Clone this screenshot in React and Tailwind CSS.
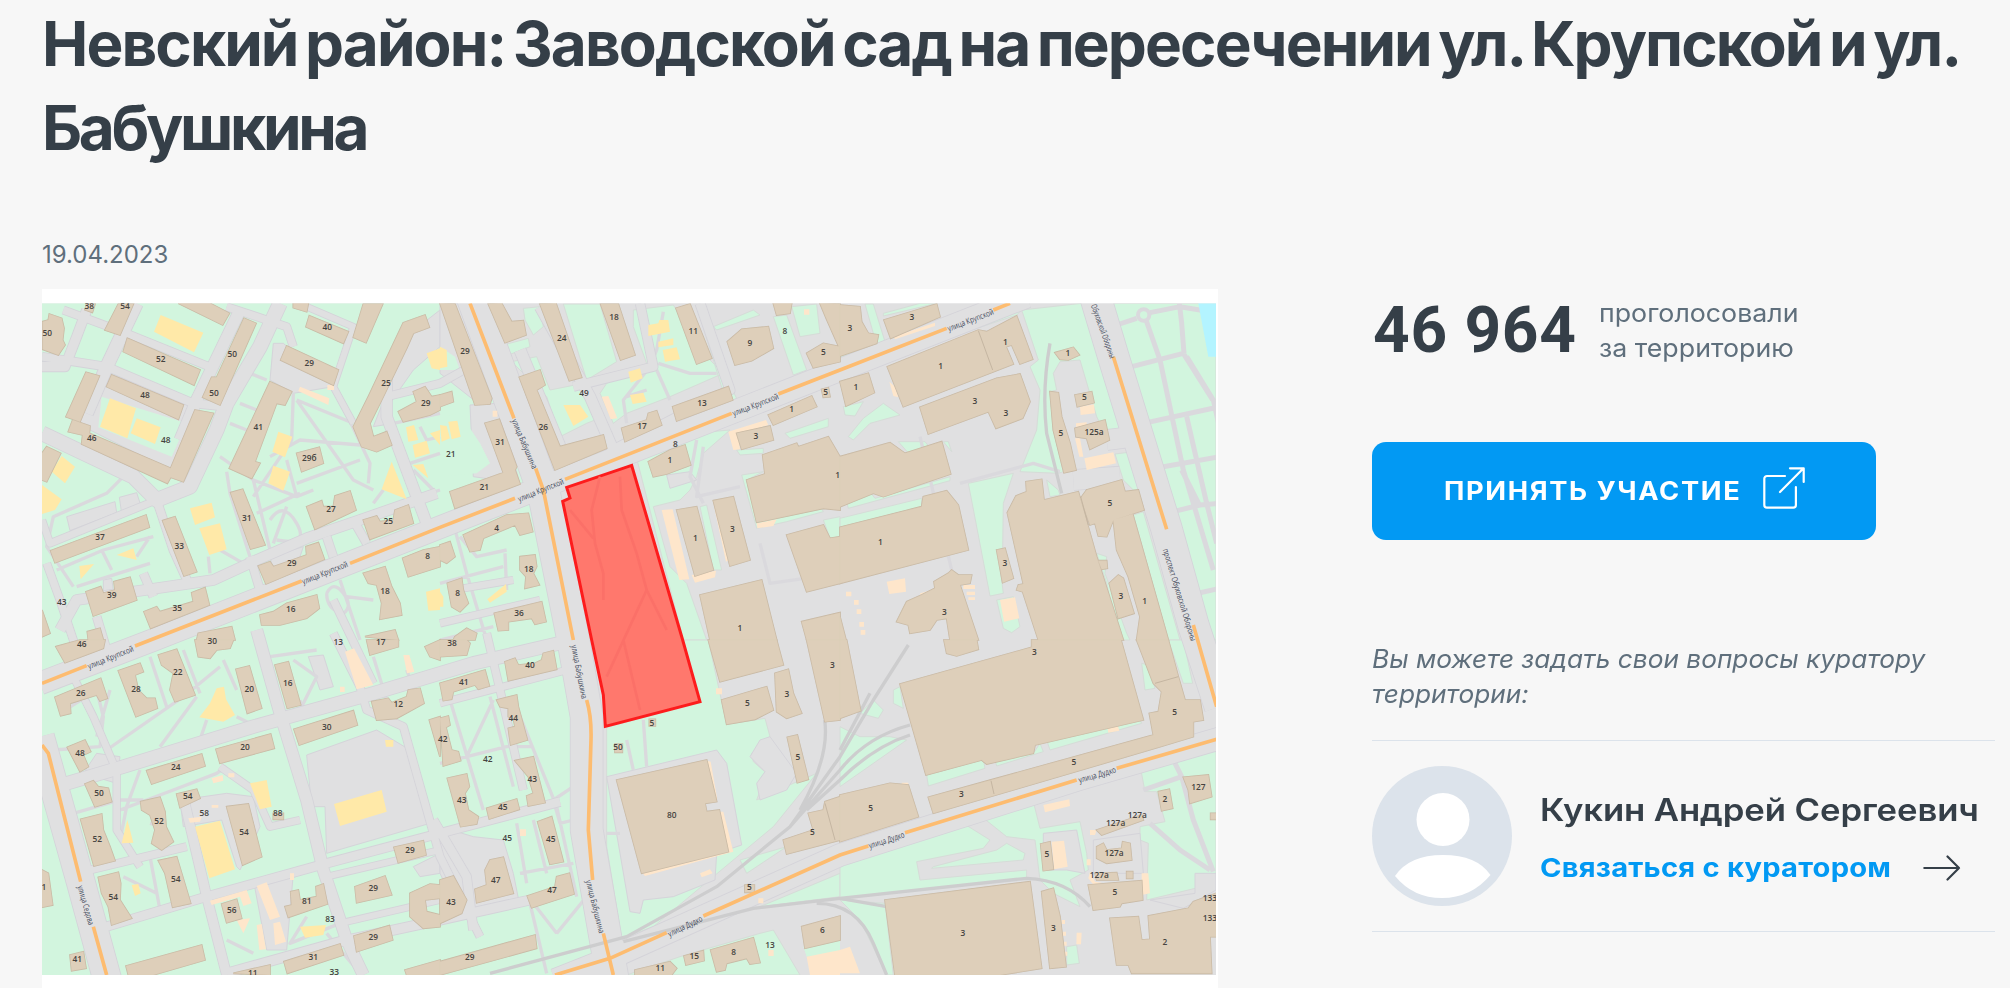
import React from 'react';

// Map geometry is split into six sheets, three across and two down.
const SHEETS = [
  {
    x: 0,
    y: 0,
    green: '',
    lots: 'M80 680 225 635 230 668 90 722zM238 622 290 608 302 645 245 670zM150 260 205 250 470 345 400 545 150 420 120 395zM700 160 730 160 880 290 760 310 690 270zM690 800 790 770 780 800 700 840zM190 870 215 865 220 900 190 905zM1110 130 1200 60V170L1120 240 1050 340 1060 400 1000 410z',
    garden: 'M185 320 440 400 395 500 175 412z',
    peach: 'M780 290 868 325 865 345 775 303zM862 285h20v15h-20z',
    yellow:
      'M362 75 490 128 462 187 342 125zM210 325 288 355 262 445 180 410zM290 385 362 412 345 462 272 430zM65 498 105 530 75 580 35 545zM6 585 65 628 45 660 6 672zM715 425 757 440 735 502 697 485zM700 527 750 545 730 602 685 580zM450 655 515 638 525 682 465 705zM478 715 540 700 560 778 508 795zM230 795 280 775 290 810zM118 828 162 822 122 868zM1055 515 1100 628 1025 598zM1160 190 1200 175V240l-25-5zM1098 412 1122 405 1135 450 1105 455zM1118 465 1160 452 1170 490 1125 503zM1170 430 1200 420V465zM1118 525 1150 522 1165 565zM1158 905 1200 895V960l-35 2z',
    buildings:
      'M8 95 25 90 28 72 65 85 72 115 68 150 75 165 55 195 8 178zM140 42h25l-8 25-22-8zM235 42H280L240 135 195 120zM415 40H510L568 70 548 105zM262 145 480 240 462 285 250 185zM612 85 648 100 540 345 488 322 515 262 530 262zM215 255 430 345 415 388 200 290zM138 247 178 258 120 395 78 380zM465 360 520 370 430 575 392 562 382 580 125 462 128 435 85 425 98 390 150 408 148 430 392 535zM690 275 755 305 735 345 710 340 645 515 660 520 635 565 568 535zM808 77 925 125 910 160 798 110zM760 40h45l-5 25-40-12zM970 42H1028L978 158 940 142zM740 168 895 240 880 285 722 210zM1090 98 1155 75 1168 112 1120 130 1100 175 1025 330 990 400 1000 440 1040 425 1055 465 1010 485 965 470 940 410 985 320zM1120 305 1155 290 1175 320 1200 315V360L1170 375 1090 395 1075 365 1130 335zM770 490 838 472 850 520 785 545zM20 470 62 490 20 575 6 570V490zM32 782 318 675 328 712 45 818zM368 692 405 680 470 845 432 858zM572 608 608 598 675 765 632 777zM138 905 182 890 190 910 225 900 222 875 270 862 290 930 160 978zM312 965 350 950 360 965 460 935 455 908 495 893 508 945 332 1015zM655 828 690 815 700 830 800 795 798 770 835 758 853 808 678 882zM800 650 845 632 850 650 880 650 885 618 930 603 948 660 825 718zM970 690 1010 678 1020 695 1060 690 1065 660 1105 645 1120 700 990 748zM1088 805 1150 780 1200 770V830L1105 860zM970 850 1035 830 1055 890 1080 940 1085 975 1020 988 1025 940 1010 885 985 880zM660 975 700 965 740 940 830 915 838 955 800 985 720 1005 665 1005zM475 1030 575 1010 585 1050H470zM142 1025 180 1015 190 1050H145zM6 960 30 1030 6 1040zM975 1040 1065 1020 1075 1050z',
    labels: [[148, 48, '38'], [255, 48, '54'], [22, 130, '50'], [362, 208, '52'], [577, 192, '50'], [522, 310, '50'], [315, 315, '48'], [155, 443, '46'], [377, 450, '48'], [655, 412, '41'], [862, 112, '40'], [808, 220, '29'], [1038, 278, '25'], [1157, 338, '29'], [808, 503, '29б'], [180, 742, '37'], [418, 768, '33'], [620, 685, '31'], [215, 915, '39'], [412, 953, '35'], [755, 820, '29'], [873, 657, '27'], [1045, 693, '25'], [1163, 798, '8'], [1035, 902, '18'], [752, 956, '16'], [65, 937, '43']],
  },
  {
    x: 1200,
    y: 0,
    green:
      'M250 55 300 50 310 110 280 135 255 90zM370 42H480L530 215 440 270zM580 60 700 45 800 200 850 250 690 320 560 370 520 400 480 310 500 280 620 220 580 110zM215 215 290 200 330 300 430 280 440 290 490 380 440 400 360 440 320 320zM190 165 265 145 270 170 205 195zM1000 80 1040 75 1100 240 1060 255zM1055 50 1130 42 1140 130 1080 140zM820 110 940 60 960 75 830 120zM1035 430 1165 385V410L1050 445zM780 80 820 190 890 325 860 340zM590 505 755 430 870 420 790 490 770 560 750 600 720 630 640 650 690 830 740 880 800 1050H730zM890 480 970 475V490L900 495zM905 555 970 545 920 570 950 690 1145 655 1150 665 1040 695 950 715zM780 650 800 645 845 840 820 840zM1150 690 1200 680V740l-30 5zM490 430 515 425 520 470 500 475z',
    lots: 'M680 555 750 545 770 570 690 595zM0 40 150 40 170 130 120 345 0 250zM90 345 170 340 240 580 100 560z',
    garden: 'M0 170 45 200 60 240 0 240zM0 380 60 370 120 460 150 520 110 550 0 560z',
    peach:
      'M485 320 505 318 532 385 512 388zM665 660 698 658 748 868 718 870zM755 855 828 842 825 862 765 878zM865 425 978 390 985 405 895 432 900 478 880 480zM950 700 1010 688 1000 708 952 715zM820 640 870 808 858 815zM158 362h14v18h-14zM1092 58h16v16h-16z',
    yellow:
      'M0 170 20 180 22 230 0 235zM25 395 52 392 62 440 35 448zM0 405 20 408 30 445 5 455zM625 105 655 100 658 90 685 90 690 125 625 138zM655 155 700 145V165L655 172zM668 180 710 172 720 208 675 215zM565 245 600 235 608 265 572 278zM570 315 610 308 620 335 578 342zM370 345 420 345 445 380 400 408zM142 928 198 882 200 905 150 938zM0 905 10 920V950H0z',
    buildings:
      'M0 40 45 42 155 325 150 342 105 345zM145 42 185 40 215 95 250 92 258 135 195 158zM300 42 348 40 425 262 388 272zM482 42H535L585 195 542 210zM708 55 750 42 815 205 770 222zM862 155 905 118 985 110 1000 175 935 212 885 225zM1000 40h55l-5 30-40 5zM1100 190 1150 160 1200 170V215l-80 18zM1140 40 1200 42V178l-40-90zM238 262 300 240 315 285 290 300 360 470 490 435 500 475 345 540zM698 350 865 290 878 330 710 393zM545 415 620 390 625 370 650 362 665 405 555 455zM135 400 178 388 230 530 225 540 240 582 45 655 30 605 190 548zM0 315 35 305 40 335 0 350zM70 735 200 675 265 670 278 725 240 735 225 705 130 745 120 780 90 785zM240 800 285 795 290 830 280 850 298 885 255 895 258 860 240 840zM22 880 65 865 70 900 85 940 60 965 35 950zM0 765 30 755 45 800 20 820 0 810zM163 970 305 935 318 995 285 1003 275 985 205 995V1020L175 1022zM45 1040 80 1015 110 1030 105 1050H40zM625 515 690 480 735 465 752 525 680 552 640 560zM985 375 1115 318 1130 350 1000 405zM890 430 990 408 1000 450 905 478zM1145 298 1165 293 1170 320 1150 322zM820 632 880 620 930 810 870 828zM710 660 770 650 820 840 765 858zM780 915 965 870 1010 1050H810zM920 570 975 552 968 495 1070 460 1075 470 1165 440 1200 500V660l-50-5-200 42zM1040 735 1150 705 1170 745 1200 740V880l-100 25zM1085 995 1200 968V1050H1100z',
    labels: [[75, 183, '29'], [365, 145, '24'], [522, 80, '18'], [760, 122, '11'], [930, 160, '9'], [1035, 123, '8'], [1150, 187, '5'], [432, 310, '49'], [310, 410, '26'], [606, 408, '17'], [786, 338, '13'], [180, 457, '31'], [32, 493, '21'], [133, 590, '21'], [170, 715, '4'], [266, 838, '18'], [53, 910, '8'], [237, 968, '36'], [706, 462, '8'], [690, 510, '1'], [948, 438, '3'], [1055, 356, '1'], [1157, 305, '5'], [766, 745, '1'], [877, 718, '3'], [900, 1015, '1'], [1193, 555, '1']],
  },
  {
    x: 2400,
    y: 0,
    green:
      'M545 60 725 40 850 430 800 440 770 380 720 210 660 215 640 250 650 300 630 305 640 420 670 545 655 550 540 545 590 420 600 300 570 230 595 210zM820 40H1128V1050H1090L850 200zM385 580 520 550 490 640 488 780 480 830 490 910 450 918zM10 350 70 335 45 378 15 375zM70 385 130 340 180 375 90 400 40 450 25 440zM75 42H100L135 155 110 165zM0 685 245 625V650L0 712zM20 635 95 612 105 625 330 560V572L25 655zM175 455h80l10 12-60 22zM310 455h15l10 30zM470 930 490 1015 515 1028 540 1010 520 920zM770 790 800 800 795 850 860 1030 870 1050H835L800 880zM880 675 910 665 1020 1050H985zM825 492 865 487 915 600 880 600 850 570zM420 112 530 75 545 60 420 100zM620 570 655 600 660 615 630 620zM0 190 115 160 60 195 0 215zM130 78 290 40H240L130 70z',
    lots: '',
    garden: '',
    peach:
      'M720 350 762 343 765 370 722 375zM733 505 820 487 828 520 740 540zM705 445h15l10 55h-12zM140 875 195 865 198 905 148 912zM480 930 525 922 538 985 492 995zM240 910 285 898V908L242 918zM148 275 165 290 175 322 160 318zM160 140 285 98V108L165 148zM370 885h35v12h-35zM380 905h25v10h-25zM385 922h20v8h-20zM18 905h16v14H18zM42 930h14v14H42zM50 958h14v14H50zM58 996h14v14H58zM62 1020h14v14H62zM145 598h14v16h-14zM708 400 740 397V410H708z',
    yellow: '',
    buildings:
      'M0 45 60 50 65 95 85 130 115 135 110 160 0 198zM132 90 290 42 300 80 152 145zM142 230 415 120 440 125 530 78 578 208 540 222 515 165 498 170 520 222 190 350zM240 352 470 265 540 252 570 335 548 385 468 415 445 365 265 432zM0 275 85 250 103 308 18 348zM0 500 150 458 195 490 305 455 332 552 130 620 100 610 0 650zM0 712 245 650 250 620 320 602 355 645 385 780 0 880zM645 188 700 172 718 195 685 210 660 208zM630 305 655 308 665 380 690 460 708 540 672 548 640 420zM705 315 755 305 762 338 712 350zM705 415 795 390 808 450 750 478 740 445 708 440zM502 668 528 618 560 605 558 575 605 568 612 630 715 605 770 800 850 1050H595L548 905 530 900 535 885 550 882zM722 625 740 600 845 570 855 605 895 600 912 660 820 690 800 740 775 738 765 700 750 705zM820 690 878 672 985 1050H890L900 980 865 860 830 780zM808 880 835 855 850 865 882 970 835 985zM470 780 495 775 520 865 488 878zM170 995 200 935 245 915 285 895 282 875 325 850 335 840 355 855 395 855 390 880 360 885 385 960 415 1050H330L320 985 290 990 270 1020 210 1030 205 1005zM0 980l18 70H0zM775 812 800 812 802 835 785 838z',
    labels: [[30, 113, '3'], [216, 80, '3'], [302, 227, '1'], [496, 155, '1'], [684, 188, '1'], [48, 292, '1'], [405, 333, '3'], [498, 370, '3'], [733, 322, '5'], [663, 430, '5'], [762, 427, '125а'], [810, 640, '5'], [121, 755, '1'], [495, 820, '3'], [313, 967, '3'], [843, 918, '3'], [914, 932, '1']],
  },
  {
    x: 0,
    y: 1050,
    green: '',
    lots: 'M800 345 1010 270 1110 330 1170 550 860 640 855 500 815 500zM420 480 560 460 640 470 660 560 600 690 590 680 545 540 430 560zM130 400 170 340 240 350 230 430zM805 50 850 45 880 140 840 150zM1120 680 1200 640V700l-60 10zM640 720 760 700 740 930 680 930z',
    garden: '',
    peach:
      'M915 35 942 25 1000 135 950 148zM1090 45h18l15 50-22 5zM650 738 680 727 720 830 690 840zM510 782 620 750 635 790 610 798 600 770 515 795zM590 840 630 835 610 880zM700 850 720 845 738 905 705 915zM650 855 665 852 678 928 658 930zM515 415 548 405 550 422 520 430zM565 400h18v12h-18zM445 535 485 530 480 545 450 548zM515 495h20v8h-20zM750 700h12v20h-12zM900 140h14v16h-14z',
    yellow:
      'M530 145 552 140 558 178 585 225 550 245 478 232 510 190zM630 430 680 420 695 500 660 508zM882 492 1025 450 1040 515 900 558zM465 560 540 542 585 688 508 715zM262 540 280 608 245 610zM275 735 295 732 302 760 285 768zM780 860 858 855 850 885 795 893zM1035 300h25v20h-22z',
    buildings:
      'M48 20 120 0H195L190 25 75 68zM235 92 300 70 310 95 285 105 295 150 320 175 345 175 352 205 288 230zM355 45 410 28 465 165 405 185 390 150 400 100 365 75zM45 172 182 115 202 175 180 183 170 165 90 190 92 220 62 227zM465 0H580L570 25 530 30 510 55 475 50zM588 88 628 78 665 205 622 220zM705 75 745 65 782 195 742 205zM762 268 940 212 952 255 778 315zM995 185 1045 175 1055 188 1100 170 1105 150 1140 145 1152 190 1070 235 1010 240zM980 0H1075V20L990 45zM1155 20 1200 0V60l-30-10zM528 328 692 282 703 325 540 370zM320 392 485 342 495 378 335 432zM82 322 135 300 152 335 130 345 145 380 120 395zM135 432 160 422 175 440 205 445 215 485 165 500zM122 538 185 522 190 570 210 620 225 662 162 678zM302 485 360 472 375 515 378 560 400 605 365 630 335 610 345 570 330 525 305 510zM410 462 470 448 480 475 420 503zM560 500 625 492 665 650 608 675zM355 662 410 650 452 790 398 802 375 700zM175 712 235 697 242 730 240 780 275 835 215 855 205 800 185 760zM6 690 25 700 38 795 6 802zM545 792 590 778 605 835 560 848zM735 800 755 795 752 755 775 750 780 780 830 770 828 740 850 732 862 792 745 832zM1062 622 1150 602 1158 645 1075 668zM945 740 1035 708 1055 765 950 788zM942 888 1048 857 1058 900 950 935zM1110 760 1170 732 1200 735V775L1155 780 1160 815 1200 825V860L1150 865 1110 830zM258 978 485 915 495 960 340 1005H265zM732 965 900 912 910 945 742 1000zM90 945 130 935 138 985 95 992zM580 1000 690 975V1005zM1095 990 1200 960V1005H1100zM1168 240 1200 230V350zM700 520h30v18h-30z',
    labels: [[125, 12, '46'], [288, 147, '28'], [413, 95, '22'], [122, 160, '26'], [628, 147, '20'], [743, 130, '16'], [860, 260, '30'], [1075, 193, '12'], [895, 5, '13'], [1022, 5, '17'], [517, 3, '30'], [615, 322, '20'], [407, 381, '24'], [120, 340, '48'], [177, 460, '50'], [172, 596, '52'], [357, 542, '52'], [443, 468, '54'], [493, 520, '58'], [612, 575, '54'], [713, 518, '88'], [407, 717, '54'], [220, 772, '54'], [575, 810, '56'], [800, 782, '81'], [870, 838, '83'], [1110, 630, '29'], [1000, 745, '29'], [1000, 890, '29'], [820, 952, '31'], [883, 996, '33'], [112, 958, '41'], [638, 998, '11'], [12, 740, '1']],
  },
  {
    x: 1200,
    y: 1050,
    green:
      'M500 262 780 185 730 0H805L860 253 975 235 990 290 935 340 940 365 980 400 950 480 1060 430 1130 400 1000 560 640 860 545 895 500 620zM720 950 960 880 1000 870 1080 1005H560zM960 800 1200 700V770zM900 660 1040 620 920 700z',
    lots: 'M500 410 830 330 860 370 905 615 830 640 825 720 700 770 610 780 600 820 570 815 540 640zM100 590 190 600 220 700 240 800 60 830 0 700V560zM960 300 990 290 1070 400 1040 450 960 480 950 430 975 395 930 350z',
    garden: 'M1090 920 1200 900V940L1100 950z',
    peach:
      'M800 362 812 365 832 478 824 480zM840 515 850 515 880 635 615 708 608 700 862 635zM780 700 810 688 818 700 785 712zM1100 950 1200 930V1005H1110zM828 145h18v18h-18zM240 568h18v20h-18zM955 775h15v15h-15zM985 930h16v18h-16z',
    yellow: '',
    buildings:
      'M0 15V50L80 45 90 10 80 0H0zM195 65 225 55 235 75 285 70 305 60 310 40 340 32 350 88 205 122zM0 130 135 90 148 138 115 148 105 135 40 155 35 178 10 182zM170 180 230 165 235 200 262 300 212 315 205 265 225 260 220 235 205 230V205L180 200zM0 235 25 228 30 255 18 262 35 330 55 335 62 362 10 378zM22 415 80 402 88 440 75 460 85 510 115 530 110 552 62 560zM225 362 280 350 315 488 265 498 260 468 280 460 265 410zM140 505 230 477 238 508 148 537zM293 545 335 530 370 665 330 673zM135 690 150 660 190 652 220 760 110 788 105 748 140 735zM0 720 40 708 80 780 65 820 0 850zM262 768 345 740 350 710 388 700 402 762 275 803zM0 965 285 885 290 925 0 1005zM530 420 800 360 830 485 795 490 800 515 838 510 865 635 605 700zM845 180 980 140 1000 210 945 238 860 253zM1005 100 1045 88 1060 160 1085 220 1040 235 1010 215zM805 0H1010L1030 75 840 125zM1100 0H1200V240l-45 5zM1042 292 1072 285 1105 418 1072 428zM1030 600 1120 570 1105 520 1150 510 1155 485 1200 470V600l-160 42zM812 930 940 893 960 968 930 972 920 955 860 970 855 990 830 995zM732 948 790 932 792 962 738 975zM585 990 690 965 710 985 695 1005H585zM1085 860 1200 828V900l-105 25zM915 735h28v22h-28zM628 238h18v20h-18zM525 312h22v25h-22z',
    labels: [[36, 10, '38'], [270, 76, '40'], [71, 127, '41'], [220, 233, '44'], [143, 358, '42'], [8, 298, '42'], [277, 417, '43'], [65, 480, '43'], [188, 502, '45'], [202, 593, '45'], [332, 598, '45'], [167, 721, '47'], [336, 751, '47'], [33, 787, '43'], [89, 952, '29'], [534, 322, '50'], [636, 248, '5'], [695, 524, '80'], [922, 190, '5'], [1041, 162, '3'], [1177, 76, '3'], [1074, 350, '5'], [1117, 576, '5'], [928, 741, '5'], [881, 935, '8'], [990, 916, '13'], [763, 948, '15'], [661, 985, '11'], [1147, 871, '6']],
  },
  {
    x: 2400,
    y: 1050,
    green:
      'M0 660 370 550 450 600 430 625 230 665 240 720 560 690V715L0 775zM280 680 470 630 500 610 555 640 550 660 275 685zM0 780 135 790 160 1005H140L60 840zM260 405 430 358 435 385 265 438zM465 360 580 340 600 310 610 335 470 378zM620 300 900 240 905 250 630 330zM425 530 580 485 600 565 720 545 740 640 745 690 690 720 720 800 640 760 600 720 585 600 500 590zM900 375 1128 320V730L920 780 925 610 900 600V560L975 545 950 455 915 455zM985 0H1030L1058 130 1030 130zM160 150 180 140 190 205 160 190zM0 260 60 290 150 290 200 300 0 440zM60 220 100 180 130 210 115 235zM680 920 710 915 718 970 680 975zM905 70 925 75 945 145 915 150zM1090 0H1128V100z',
    lots: 'M610 580 710 570 735 700 680 690 610 690zM760 600 900 580 910 700 760 700zM1030 805 1128 750V700H1065V760L930 780z',
    garden: '',
    peach:
      'M610 495 688 478 690 498 615 517zM635 605 672 602 683 680 642 688zM905 700h20l5 60-25 5zM800 250 830 245 838 272 805 278zM0 930 30 920 60 1000H0zM710 878h15l-2 35h-14zM750 570h20l-5 15h-15zM750 695 765 725 785 728 765 740 745 715zM185 428h20v6h-20zM740 658h12v18h-12zM665 840h10v12h-10zM668 875h10v12h-10zM670 905h10v12h-10zM672 935h10v12h-10z',
    yellow: '',
    buildings:
      'M180 132 575 22V0H843L910 240 585 315 580 340 440 372 425 360 258 405zM0 0 20 0 62 212 0 235zM312 0H410L415 28 350 48 320 40zM890 0H985L1015 110 1035 180 1080 180 1090 240 1060 245 1060 290 955 322 940 285 928 220 955 215 965 155 940 130zM265 472 445 422 940 285 955 322 280 520zM0 465 150 430 205 435 235 530 0 605zM602 612 630 605 640 688 610 692zM135 780 570 725 605 985 480 1005H165zM605 755 640 745 660 830 678 980 630 985zM745 735 905 722 908 780 845 790 840 800 760 810zM810 835 895 830 905 900 930 898 925 828 1045 805 1060 785 1128 760V890L1110 890 1115 1000H875L865 975 830 975zM955 455 988 448 998 505 965 512zM1030 412 1105 405 1115 470 1050 490 1045 450zM770 570 905 525 910 540 785 585zM770 620 790 610 800 630 845 625 848 605 870 610 875 660 800 670 770 655zM765 700 830 698 835 720H770zM860 695h18v20h-18zM1112 520h16v18h-16z',
    labels: [[583, 35, '3'], [1004, 217, '5'], [702, 365, '5'], [364, 462, '3'], [92, 504, '5'], [975, 477, '2'], [1075, 442, '127'], [827, 550, '127а'], [892, 525, '127а'], [822, 640, '127а'], [778, 705, '127а'], [621, 643, '5'], [369, 880, '3'], [640, 863, '3'], [825, 757, '5'], [975, 905, '2'], [1110, 775, '133'], [1110, 835, '133']],
  },
];

const WEST_PARK = 'M6 40H1290L1510 600 1600 1050 1640 1300 1630 1700 1700 2055H6z';

const FOOTPATHS =
  'M770 330 940 570 1000 600M770 330 940 400M760 310 755 450 640 620M890 310 990 520 985 580M690 500 780 450 960 465M740 510 770 620M640 570 770 620 820 600M770 580 960 510M560 545 570 610 630 800M540 500 640 570 690 780M505 800 510 850M540 780 610 820M250 560 200 610 40 680 20 770 100 890M50 840 190 780 340 740M185 780 215 840M290 800 330 740M110 890 330 820M650 670 780 610M690 690q40-60 80 10t-60 50M700 760 740 650M1000 640 1030 600M1110 520 1200 490M1120 540 1180 600M1140 620 1200 600M860 910q20-40 50 0t0 60q-50-10-50-60M900 870 960 1050M920 920 1000 930M630 250 680 270M600 340 650 360M570 400 620 420M580 290 640 170M1060 400 1200 370M1140 410 1160 450 1200 440M1870 65 1850 180 1830 230 1750 330 1760 400M1760 320 1820 300M1855 220 1950 250 2030 250M1850 240 1890 330M1480 1840 1550 1930M1640 1820 1550 1930M1470 1840 1520 2050M1600 1490 1540 1530 1560 1600M1560 1600 1600 1590M1360 1230 1280 1400M1230 1230 1330 1560M1200 1420 1400 1370 1480 1370M1350 1220 1420 1490M1420 1230 1550 1550 1610 1820M1430 1600 1460 1780M1480 1590 1520 1750M1440 1750 1600 1720M60 1270 170 1200 190 1280 180 1370 40 1380M210 1200 170 1340M200 1380 430 1220 540 1130M470 1220 360 1370M500 1290 480 1350M590 1280 650 1310M550 1110 590 1200M760 1110 830 1160 780 1260M690 1100 830 1080M330 1100 380 1250M430 1080 480 1210M300 1440 260 1550 240 1650M240 1560 400 1500 530 1450 560 1430M330 1600 370 1610M250 1760 350 1810M330 1700 360 1860M560 1950 640 1990M800 1880 750 1960 900 1900M860 1930 960 2050M780 1230 790 1290M840 1260 900 1240M100 1570 240 1530 310 1530M1100 1140 1130 1220M1000 1100 1040 1230M1400 620 1480 600M1240 700 1280 850 1340 1050M1200 880 1390 830M1200 1050 1360 1010M1260 740 1310 800 1400 780M1395 790 1400 900M1760 1350 1780 1440M1810 1290 1820 1430M1700 1630 1740 1630M2640 440 2780 1030M2760 580 2980 520 3060 545M1990 470 1970 620 2100 590M2160 760 2190 880 2400 850M1970 450 1950 560 1990 640';

const PARK_PATHS =
  'M3230 105 3290 85M3330 68 3420 50 3540 70M3255 235 3430 190 3518 330M3418 40 3425 100 3432 190M3318 90 3360 210 3430 540 3520 840M3440 200 3520 330 3540 420M3310 400 3540 350M3345 535 3540 500M3400 665 3480 645 3540 640M3450 915 3540 895M3425 540 3478 645M3440 380 3500 640 3530 760M3260 220 3500 1050M3395 1400 3425 1460 3310 1500M3425 1460 3460 1590 3520 1745M3330 1600 3420 1680 3510 1740';

const STREETS = [
  ['M1290 0 1510 600 1600 1050 1640 1280 1640 1620 1720 2080', 96],
  ['M0 1180 340 1050 1200 712 2400 240 2960 20', 66],
  ['M1545 2070 1710 2005 2400 1695 3110 1470 3540 1345', 66],
  ['M0 1340 122 1775 205 2080', 84],
  ['M3160 0 3220 200 3380 718 3460 1005 3540 1250', 92],
  ['M720 40 660 170 560 340 530 420 450 590 350 630 280 560 6 430', 42],
  ['M600 60 470 330 420 450', 34],
  ['M290 40 200 230 140 370', 38],
  ['M70 60 260 130 520 235', 22],
  ['M6 200 200 230 460 340 560 350', 24],
  ['M6 230 75 230 110 140 140 60', 28],
  ['M560 50 740 110 760 170', 22],
  ['M800 50 940 110 880 290 940 400', 18],
  ['M350 630 30 760 6 690', 20],
  ['M350 630 400 780 450 890', 24],
  ['M60 1020 110 930 520 870 650 810 800 745 960 690 1190 610', 30],
  ['M1040 250 1040 380 1160 700', 32],
  ['M1040 320 1200 280 1290 230', 22],
  ['M940 690 980 760M860 740 880 800M630 800 660 900M310 850 340 920M170 980 200 1080', 24],
  ['M20 820 60 930 110 1080', 22],
  ['M80 1480 250 1430 640 1310 1000 1210 1300 1120 1600 1050', 38],
  ['M650 1020 720 1270 800 1530 850 1740 920 1950 970 2055', 34],
  ['M200 1910 500 1820 860 1720 1200 1630 1560 1535', 26],
  ['M430 1520 500 1820 560 2055', 28],
  ['M560 2050 900 1955 1200 1890 1470 1830', 28],
  ['M230 1450 230 1620 300 1730', 20],
  ['M150 1740 440 1670', 22],
  ['M100 1160 160 1280 220 1420', 20],
  ['M880 1030 960 1190 980 1260 1090 1310 1200 1700 1320 1940', 22],
  ['M880 930 1000 1180M1340 1030 1380 1200 1450 1500', 22],
  ['M1200 1240 1580 1140M1240 900 1420 870M1200 1000 1500 930', 20],
  ['M1180 1590 1280 1760 1300 1920', 26],
  ['M860 1760 1200 1680M900 1900 1200 1830', 18],
  ['M540 1430 640 1500 690 1610 780 1590', 20],
  ['M1440 180 1560 470', 34],
  ['M1500 50 1650 320 1720 480', 32],
  ['M1600 290 1840 230 1800 40', 26],
  ['M1720 480 2070 300 1980 40', 28],
  ['M3200 450 3280 440M3100 570 3240 560', 60],
];

const RAILS =
  'M1350 2050 1760 1940 2030 1790 2250 1610 2400 1400 2500 1230 2605 1065M2250 1610 2400 1440Q2480 1340 2610 1305M2300 1560 2400 1470Q2500 1370 2610 1335M2400 1380 2490 1210M1750 1955 2140 1855 2400 1825 2960 1765Q3080 1770 3150 1850M2354 1290Q2370 1400 2280 1560M2330 1840Q2450 1840 2500 1960L2540 2055M2400 1825 2540 1850M3030 160Q3005 300 3020 430L3065 610';

const ARTERIES =
  'M6 1180 140 1127M285 1068 785 873M930 820 1200 712 1425 625M1575 568 2075 370M2215 312 2400 240 2720 115M2860 60 2910 40M1290 40 1422 385M1487 535 1510 600 1600 1050M1640 1230Q1655 1280 1653 1350L1645 1620 1658 1770M1690 1930 1720 2055M1545 2055 1710 2005 1880 1928M1990 1878 2400 1695 2485 1668M2595 1628 3110 1470M3230 1435 3530 1348M6 1365 25 1390 122 1775M160 1910 200 2055M3220 200 3380 718M3460 1005 3530 1250';

const STREET_NAMES = [
  [855, 850, -22, 146, 'улица Крупской'],
  [212, 1104, -22, 146, 'улица Крупской'],
  [1503, 602, -22, 146, 'улица Крупской'],
  [2147, 346, -21, 146, 'улица Крупской'],
  [2792, 92, -21, 146, 'улица Крупской'],
  [1452, 462, 67, 160, 'улица Бабушкина'],
  [1616, 1146, 79, 164, 'улица Бабушкина'],
  [1664, 1850, 76, 164, 'улица Бабушкина'],
  [1936, 1910, -26, 112, 'улица Дудко'],
  [2540, 1652, -18, 112, 'улица Дудко'],
  [3172, 1456, -16, 116, 'улица Дудко'],
  [136, 1846, 74, 122, 'улица Седова'],
  [3188, 124, 70, 170, 'Обуховской Обороны'],
  [3417, 915, 73, 288, 'проспект Обуховской Обороны'],
];

const Layer = ({ name, ...props }) => (
  <g {...props}>
    {SHEETS.map((s) => (
      <path key={`${s.x}-${s.y}`} d={s[name]} transform={`translate(${s.x} ${s.y})`} />
    ))}
  </g>
);

const TerritoryMap = () => (
  <svg viewBox="6 -3 3528 2097" className="block w-[1176px] h-[699px] bg-white" fontFamily="'Open Sans', sans-serif">
    <clipPath id="map-area">
      <rect x="6" y="40" width="3522" height="2015" />
    </clipPath>
    <filter id="soften" x="0" y="0" width="1" height="1">
      <feGaussianBlur stdDeviation="1.7" />
    </filter>
    <g clipPath="url(#map-area)">
      <g filter="url(#soften)">
        <rect x="-20" y="0" width="3580" height="2100" fill="#e0e0e1" />
        <path d={WEST_PARK} fill="#d2f5de" />
        <Layer name="green" fill="#d2f5de" stroke="#d6dcd8" strokeWidth="3" />
        <Layer name="lots" fill="#e0e0e1" stroke="#d5d4da" strokeWidth="3" />
        <Layer name="garden" fill="#d2f5de" />

        <g fill="none" strokeLinejoin="round">
          <path d={FOOTPATHS} stroke="#dad9dd" strokeWidth="10" />
          <path d={PARK_PATHS} stroke="#dad9dd" strokeWidth="15" />
          {STREETS.map(([d, w]) => (
            <path key={d} d={d} stroke="#d4d3d9" strokeWidth={w + 5} />
          ))}
          {STREETS.map(([d, w]) => (
            <path key={d} d={d} stroke="#e0e0e1" strokeWidth={w} />
          ))}
          <path d={RAILS} stroke="#cdcdce" strokeWidth="10" />
        </g>

        <path d="M3475 40H3530V200H3505z" fill="#b3f4ff" />
        <circle cx="3311" cy="75" r="17" fill="#d2f5de" stroke="#dad9dd" strokeWidth="12" />

        <Layer name="peach" fill="#fee6cb" />
        <Layer name="yellow" fill="#ffe9a8" />
        <Layer name="buildings" fill="none" stroke="#c6b7a2" strokeWidth="5" />
        <Layer name="buildings" fill="#decfba" stroke="#decfba" strokeWidth="1" />
        <path d="M2815 122 2858 240M2853 1472 2862 1512M3345 1180 3415 1160M3122 620 3145 705M2355 1540 2385 1650" stroke="#c5b6a2" strokeWidth="3" fill="none" />
        <path d={ARTERIES} fill="none" stroke="#fdbc70" strokeWidth="11" />

        <path
          d="M1775 526 1928 1050 1980 1235 1696 1309 1690 1215 1655 1050 1568 634 1590 624 1580 592z"
          fill="#ff786d"
          stroke="#fd1c1e"
          strokeWidth="9"
        />
        <path
          d="M1680 560 1655 660 1665 760 1690 850 1690 930M1740 560 1745 660 1790 790 1820 900 1700 1160M1590 660 1660 745M1820 900 1880 1020M1750 1050 1800 1260"
          fill="none"
          stroke="#fb7068"
          strokeWidth="8"
        />
      </g>

      <g fill="#45433f" fontSize="25" fontWeight="600" textAnchor="middle">
        {SHEETS.map((s) =>
          s.labels.map(([x, y, text]) => (
            <text key={`${s.x + x}-${s.y + y}`} x={s.x + x} y={s.y + y + 9}>
              {text}
            </text>
          ))
        )}
      </g>
      <g fill="#414859" fontSize="25" textAnchor="middle">
        {STREET_NAMES.map(([x, y, angle, length, text]) => (
          <text
            key={`${x}-${y}`}
            transform={`translate(${x} ${y}) rotate(${angle})`}
            y="7"
            textLength={length}
            lengthAdjust="spacingAndGlyphs"
          >
            {text}
          </text>
        ))}
      </g>
    </g>
  </svg>
);

const ShareIcon = () => (
  <svg viewBox="0 0 42 42" className="w-[42px] h-[42px]" fill="none" stroke="white" strokeWidth="2.2" strokeLinecap="round" strokeLinejoin="round">
    <path d="M22 9H4a2.7 2.7 0 0 0-2.7 2.7v26.2a2.7 2.7 0 0 0 2.7 2.7h26.2a2.7 2.7 0 0 0 2.7-2.7V20" />
    <path d="M17 25 40.5 1.3M27 1.3h13.7V15" />
  </svg>
);

const Avatar = () => (
  <svg viewBox="0 0 140 140" className="w-[140px] h-[140px] shrink-0">
    <circle cx="70" cy="70" r="70" fill="#dce3eb" />
    <circle cx="71" cy="53.5" r="26.5" fill="white" />
    <path d="M23 110Q37 89 71 89t47.500 20Q99 132 70 132T23 110z" fill="white" />
  </svg>
);

const Curator = () => (
  <div className="mt-[28px] h-[192px] border-y border-[#dce3eb] flex items-center gap-[28px]">
    <Avatar />
    <div className="whitespace-nowrap pt-[5px]">
      <p className="origin-left scale-x-112 text-[31px] leading-[40px] font-semibold tracking-[-0.1px] text-[#353f48]">Кукин Андрей Сергеевич</p>
      <a href="#curator" className="mt-[18px] flex items-center">
        <span className="w-[383px]">
          <span className="inline-block origin-left scale-x-112 text-[26px] leading-[40px] font-bold tracking-[0.2px] text-[#0299f3]">Связаться с куратором</span>
        </span>
        <svg viewBox="0 0 38 26" className="w-[38px] h-[26px]" fill="none" stroke="#353f48" strokeWidth="2.2" strokeLinecap="round" strokeLinejoin="round">
          <path d="M1.300 13H36M24.500 1.500 36 13 24.500 24.500" />
        </svg>
      </a>
    </div>
  </div>
);

const App = () => {
  return (
    <div className="w-[2010px] h-[988px] overflow-hidden bg-[#f7f7f7] font-['Inter',sans-serif] text-[#5f6f7c]">
      <h1 className="h-[236px] pt-[2px] pl-[42px] whitespace-nowrap text-[62px] leading-[84px] font-bold tracking-[-1.9px] [word-spacing:-5.3px] text-[#353f48]">
        Невский район: Заводской сад на пересечении ул. Крупской и ул.
        <br />
        <span className="tracking-[-3.3px]">Бабушкина</span>
      </h1>

      <div className="flex pl-[42px]">
        <div className="w-[1176px] shrink-0">
          <p className="h-[53px] pt-[1px] text-[24px] leading-[36px]">19.04.2023</p>
          <TerritoryMap />
        </div>

        <div className="w-[623px] ml-[154px] pt-[59px] shrink-0">
          <div className="flex h-[147px] whitespace-nowrap">
            <span className="w-[227px] pt-[1px] pl-[1px] font-['Roboto',sans-serif] text-[64px] leading-[70px] font-bold tracking-[0.7px] text-[#353f48]">46 964</span>
            <span className="pt-[1px] origin-left scale-x-107 text-[25px] leading-[35px]">
              проголосовали
              <br />
              за территорию
            </span>
          </div>

          <button type="button" className="w-[504px] h-[98px] pl-[72px] rounded-[14px] bg-[#0299f3] flex items-center gap-[20px] text-white whitespace-nowrap">
            <span className="w-[299px] text-left">
              <span className="inline-block origin-left scale-x-109 text-[25px] leading-[36px] font-bold tracking-[1.5px]">ПРИНЯТЬ УЧАСТИЕ</span>
            </span>
            <span className="pb-[6px]">
              <ShareIcon />
            </span>
          </button>

          <p className="mt-[102px] origin-left scale-x-105 text-[25px] leading-[35px] italic whitespace-nowrap">
            Вы можете задать свои вопросы куратору
            <br />
            территории:
          </p>
          <Curator />
        </div>
      </div>
    </div>
  );
};

export default App;
